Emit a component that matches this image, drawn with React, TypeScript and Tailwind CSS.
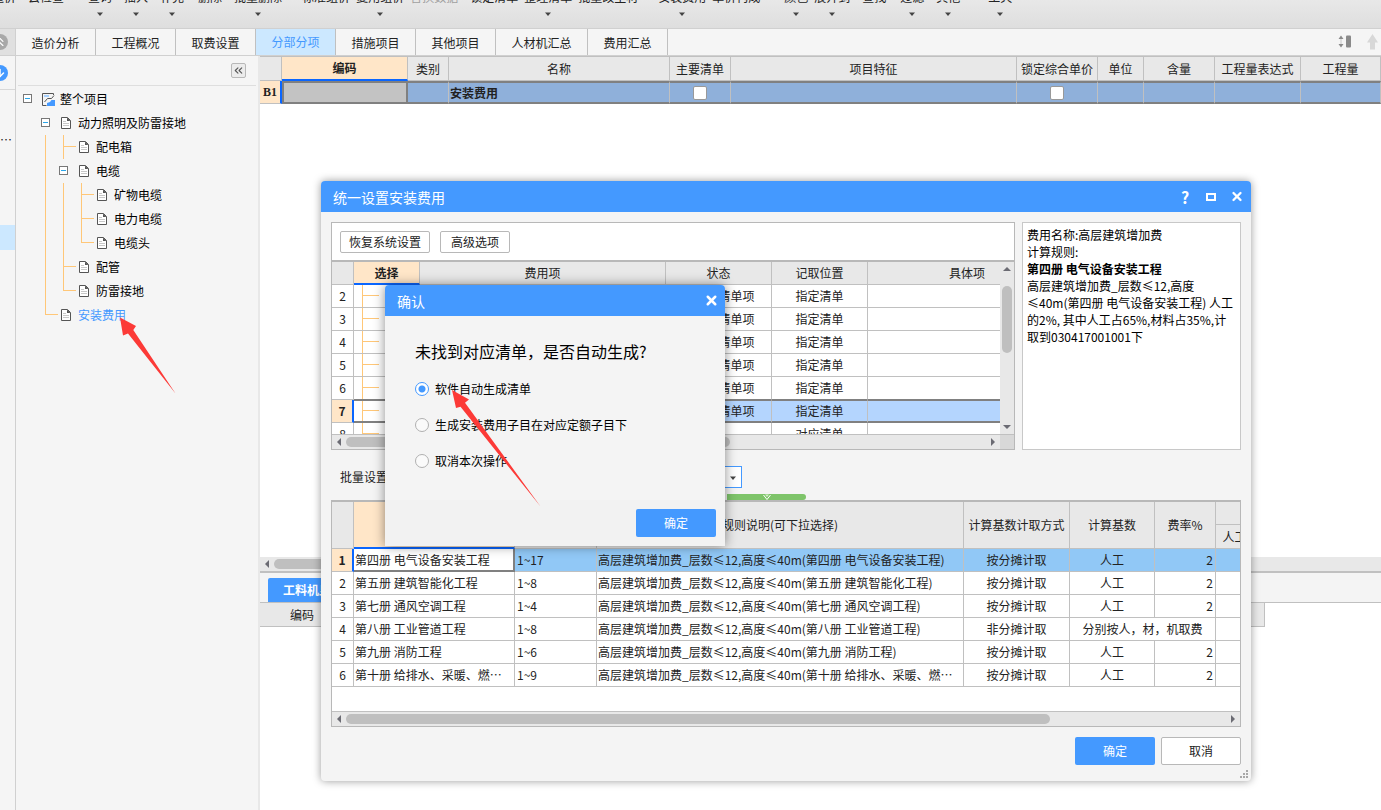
import { useState } from "react"
import type { ReactNode } from "react"
import { ArrowDown, ChevronsLeft, ChevronsUp, X } from "lucide-react"
import clsx from "clsx"

type Tool = {
  label: string
  spacing: string
  menu?: boolean
  disabled?: boolean
}

const tools: Tool[] = [
  { label: "造价", spacing: "-ml-2" },
  { label: "云检查", spacing: "ml-3" },
  { label: "查询", spacing: "ml-6", menu: true },
  { label: "插入", spacing: "ml-3", menu: true },
  { label: "补充", spacing: "ml-3", menu: true },
  { label: "删除", spacing: "ml-3.5" },
  { label: "批量删除", spacing: "ml-3", menu: true },
  { label: "标准组价", spacing: "ml-5" },
  { label: "复用组价", spacing: "ml-1.5", menu: true },
  { label: "替换数据", spacing: "ml-1.5", disabled: true },
  { label: "锁定清单", spacing: "ml-3" },
  { label: "整理清单", spacing: "ml-1.5", menu: true },
  { label: "批量改主材", spacing: "ml-1.5" },
  { label: "安装费用", spacing: "ml-5", menu: true },
  { label: "单价构成", spacing: "ml-1.5" },
  { label: "颜色", spacing: "ml-6", menu: true },
  { label: "展开到", spacing: "ml-1.5", menu: true },
  { label: "查找", spacing: "ml-3" },
  { label: "过滤", spacing: "ml-3.5", menu: true },
  { label: "其他", spacing: "ml-3", menu: true },
  { label: "工具", spacing: "ml-7", menu: true },
]

const tabs = [
  "造价分析",
  "工程概况",
  "取费设置",
  "分部分项",
  "措施项目",
  "其他项目",
  "人材机汇总",
  "费用汇总",
]

type Guide = "none" | "line" | "tee" | "end" | "toggle"

const tree: { label: string; guides: Guide[]; active?: boolean }[] = [
  { label: "整个项目", guides: ["toggle"] },
  { label: "动力照明及防雷接地", guides: ["none", "toggle"] },
  { label: "配电箱", guides: ["none", "line", "tee"] },
  { label: "电缆", guides: ["none", "line", "toggle"] },
  { label: "矿物电缆", guides: ["none", "line", "line", "tee"] },
  { label: "电力电缆", guides: ["none", "line", "line", "tee"] },
  { label: "电缆头", guides: ["none", "line", "line", "end"] },
  { label: "配管", guides: ["none", "line", "tee"] },
  { label: "防雷接地", guides: ["none", "line", "end"] },
  { label: "安装费用", guides: ["none", "end"], active: true },
]

const feeRows = [
  { no: 2, state: "可计取清单项", position: "指定清单" },
  { no: 3, state: "可计取清单项", position: "指定清单" },
  { no: 4, state: "可计取清单项", position: "指定清单" },
  { no: 5, state: "可计取清单项", position: "指定清单" },
  { no: 6, state: "可计取清单项", position: "指定清单" },
  { no: 7, state: "可计取清单项", position: "指定清单" },
  { no: 8, state: "", position: "对应清单" },
]

const ruleRows = [
  { book: "第四册 电气设备安装工程", range: "1~17" },
  { book: "第五册 建筑智能化工程", range: "1~8" },
  { book: "第七册 通风空调工程", range: "1~4" },
  { book: "第八册 工业管道工程", range: "1~8", merged: true },
  { book: "第九册 消防工程", range: "1~6" },
  { book: "第十册 给排水、采暖、燃…", range: "1~9", cut: true },
]

const options = [
  "软件自动生成清单",
  "生成安装费用子目在对应定额子目下",
  "取消本次操作",
]

const Caret = () => (
  <svg width="6" height="4" viewBox="0 0 6 4" aria-hidden="true">
    <path d="M0 0.5h6L3 4z" fill="#444" />
  </svg>
)

const ScrollArrow = ({ dir }: { dir: "left" | "right" | "up" | "down" }) => {
  const paths = {
    left: "M7 1v8L3 5z",
    right: "M3 1v8l4-4z",
    up: "M1 7h8L5 3z",
    down: "M1 3h8L5 7z",
  }
  return (
    <svg
      className="shrink-0"
      width="10"
      height="10"
      viewBox="0 0 10 10"
      aria-hidden="true"
    >
      <path d={paths[dir]} fill="#6b6b73" />
    </svg>
  )
}

const PageIcon = () => (
  <svg width="10" height="12" viewBox="0 0 10 12" fill="none" aria-hidden="true">
    <path d="M0.5 0.5h6l3 3v8h-9z" fill="#fff" stroke="#555" />
    <path d="M6 0.5l3.5 3.5H6z" fill="#555" />
    <path d="M2 4.5h3M2 6.5h6M2 8.5h6" stroke="#c8c8c8" />
  </svg>
)

const ProjectIcon = () => (
  <svg width="13" height="13" viewBox="0 0 13 13" fill="none" aria-hidden="true">
    <path d="M11.5 2V0.5H0.5v12h4" stroke="#555" />
    <path d="M2 2h5v2H2z" fill="#a9d2ff" />
    <path d="M12 2.5L9.500 5.5H5.5L2.500 9" stroke="#555" />
    <path d="M5 12.500V10l3-1 1.500-2H13v6H5z" fill="#4499ff" />
  </svg>
)

const GuideCell = ({ type }: { type: Guide }) => {
  if (type === "toggle") {
    return (
      <span className="flex w-[18px] shrink-0 items-center justify-center">
        <svg width="10" height="10" viewBox="0 0 10 10" aria-hidden="true">
          <rect x="1.5" y="0.5" width="8" height="8" fill="#fff" stroke="#777" />
          <path d="M3 4.5h5" stroke="#2aa5e8" />
        </svg>
      </span>
    )
  }
  return (
    <svg
      className="shrink-0 overflow-visible"
      width="18"
      height="24"
      viewBox="0 0 18 24"
      fill="none"
      stroke="#ffc778"
      aria-hidden="true"
    >
      {(type === "line" || type === "tee") && <path d="M9.5 0v24" />}
      {type === "end" && <path d="M9.5 0v12" />}
      {(type === "tee" || type === "end") && <path d="M9 11.5h13" />}
    </svg>
  )
}

const Th = ({
  children,
  active,
  className,
  rowSpan,
}: {
  children?: ReactNode
  active?: boolean
  className?: string
  rowSpan?: number
}) => (
  <th
    rowSpan={rowSpan}
    className={clsx(
      "overflow-hidden whitespace-nowrap border-r border-r-[#c0c0c0] p-0 text-center",
      active
        ? "border-b-2 border-b-[#0a66ff] bg-[#ffe6c8] font-bold"
        : "border-b border-b-[#c0c0c0] bg-[#e8e8e8] font-normal",
      className,
    )}
  >
    {children}
  </th>
)

const Ribbon = () => (
  <div className="flex h-7 shrink-0 items-end overflow-hidden bg-linear-to-b from-[#e8e8e8] to-[#dedede]">
    {tools.map((tool) => (
      <button
        key={tool.label}
        disabled={tool.disabled}
        className={clsx(
          "flex h-[39px] shrink-0 flex-col items-center gap-[7px] whitespace-nowrap leading-4",
          tool.spacing,
          tool.disabled && "text-[#a0a0a0]",
        )}
      >
        {tool.label}
        {tool.menu && <Caret />}
      </button>
    ))}
  </div>
)

const TabBar = () => (
  <div className="flex h-7 shrink-0 border-y border-[#d0d0d0] bg-[#f5f5f5]">
    <div className="flex w-4 items-center overflow-hidden border-r border-[#d0d0d0] bg-[#e0e0e0]">
      <button
        aria-label="收起"
        className="-ml-2 flex size-4 shrink-0 items-center justify-center rounded-full bg-[#a8a8a8] text-white"
      >
        <ChevronsUp size={14} />
      </button>
    </div>
    <nav className="flex">
      {tabs.map((tab) => (
        <button
          key={tab}
          className={clsx(
            "border-r border-[#c0c0c0]",
            tab.length > 4 ? "w-[92px]" : "w-20",
            tab === "分部分项" ? "bg-[#cce8ff] text-[#4499ff]" : "pt-0.5",
          )}
        >
          {tab}
        </button>
      ))}
    </nav>
    <div className="ml-auto flex items-center gap-3">
      <svg width="16" height="14" viewBox="0 0 16 14" aria-hidden="true">
        <path d="M0.5 4h5L3 0.5zM0.5 9h5L3 12.500z" fill="#8a8a8a" />
        <path d="M3 4v5" stroke="#c8c8c8" />
        <rect x="8" y="0.500" width="5" height="12" rx="1" fill="#8a8a8a" />
      </svg>
      <svg width="15" height="16" viewBox="0 0 15 16" aria-hidden="true">
        <path d="M6.5 0L12 8.500H9v7H4v-7H1z" fill="#d8d8d8" />
      </svg>
    </div>
  </div>
)

const Sidebar = () => (
  <aside className="flex w-[260px] shrink-0 bg-[#f5f5f5]">
    <div className="flex w-4 flex-col overflow-hidden border-r border-[#d0d0d0]">
      <div className="flex h-[34px] items-center border-b border-[#d8d8d8]">
        <button
          aria-label="下载"
          className="-ml-2 flex size-4 shrink-0 items-center justify-center rounded-full bg-[#4499ff] text-white"
        >
          <ArrowDown size={12} strokeWidth={3} />
        </button>
      </div>
      <div className="mt-[42px] leading-4">…</div>
      <div className="mt-[77px] h-[25px] bg-[#cce8ff]" />
    </div>
    <div className="flex-1 border-r-2 border-[#e8e8e8]">
      <div className="mx-0.5 flex h-[30px] items-center justify-end border-b border-[#dedede] pr-2.5">
        <button
          aria-label="折叠"
          className="flex size-[15px] items-center justify-center rounded-xs border border-[#b8b8b8] bg-[#ececec] text-[#555]"
        >
          <ChevronsLeft size={13} />
        </button>
      </div>
      <ul className="pl-0.5 pt-px">
        {tree.map((node, index) => (
          <li key={node.label} className="flex h-6 items-center">
            {node.guides.map((guide, i) => (
              <GuideCell key={i} type={guide} />
            ))}
            <span className="flex w-6 justify-center">
              {index === 0 ? <ProjectIcon /> : <PageIcon />}
            </span>
            <span className={node.active ? "text-[#4499ff]" : "text-black"}>
              {node.label}
            </span>
          </li>
        ))}
      </ul>
    </div>
  </aside>
)

const GridCheckbox = ({ label }: { label: string }) => (
  <input
    type="checkbox"
    aria-label={label}
    className="mx-auto block size-3.5 appearance-none rounded-xs border border-[#999] bg-white"
  />
)

const MainGrid = () => {
  const cell = "border-y-2 border-r border-y-[#808080] border-r-[#c0c0c0] p-0"
  return (
    <table className="w-full table-fixed border-separate border-spacing-0">
      <colgroup>
        <col className="w-[22px]" />
        <col className="w-[126px]" />
        <col className="w-[41px]" />
        <col className="w-[221px]" />
        <col className="w-[61px]" />
        <col className="w-[286px]" />
        <col className="w-[81px]" />
        <col className="w-[46px]" />
        <col className="w-[71px]" />
        <col className="w-[86px]" />
        <col />
      </colgroup>
      <thead>
        <tr className="h-[25px]">
          <Th className="border-t border-t-[#c0c0c0]" />
          <Th active className="border-t border-t-[#c0c0c0]">
            编码
          </Th>
          {[
            "类别",
            "名称",
            "主要清单",
            "项目特征",
            "锁定综合单价",
            "单位",
            "含量",
            "工程量表达式",
            "工程量",
          ].map((title) => (
            <Th key={title} className="border-t border-t-[#c0c0c0]">
              {title}
            </Th>
          ))}
        </tr>
      </thead>
      <tbody>
        <tr className="h-[23px] bg-[#8fb0da] leading-4">
          <td className="border-b border-r-2 border-b-[#c0c0c0] border-r-[#0a66ff] bg-[#ffe6c8] p-0 text-center font-['Liberation_Serif',serif] font-bold">
            B1
          </td>
          <td className="border-2 border-[#808080] bg-[#c3c3c3] p-0" />
          <td className={cell} />
          <td className={clsx(cell, "pl-px font-bold")}>安装费用</td>
          <td className={cell}>
            <GridCheckbox label="主要清单" />
          </td>
          <td className={cell} />
          <td className={cell}>
            <GridCheckbox label="锁定综合单价" />
          </td>
          <td className={cell} />
          <td className={cell} />
          <td className={cell} />
          <td className={cell} />
        </tr>
      </tbody>
    </table>
  )
}

const MainArea = () => (
  <main className="flex min-w-0 flex-1 flex-col bg-white">
    <MainGrid />
    <div className="flex-1" />
    <div className="flex h-4 shrink-0 items-center gap-0.5 border-b-2 border-[#c0c0c0] bg-[#e8e8e8] pl-0.5">
      <ScrollArrow dir="left" />
      <div className="h-2.5 w-1/2 rounded-full bg-[#bfbfbf]" />
    </div>
    <div className="flex h-[30px] shrink-0 items-end border-b border-[#c0c0c0] bg-[#f4f4f4] pl-2">
      <button className="h-6 rounded-t-xs bg-[#4499ff] px-[15px] font-bold text-white">
        工料机显示
      </button>
    </div>
    <div className="h-[207px] shrink-0">
      <table className="w-[1005px] table-fixed border-separate border-spacing-0">
        <colgroup>
          <col className="w-[84px]" />
          <col />
        </colgroup>
        <thead>
          <tr className="h-6">
            <th className="border-b border-[#c0c0c0] bg-[#e8e8e8] p-0 font-normal">
              编码
            </th>
            <Th />
          </tr>
        </thead>
      </table>
    </div>
  </main>
)

const HScroll = ({ thumb, corner }: { thumb: string; corner?: boolean }) => (
  <div className="flex h-[15px] border-t border-[#c0c0c0] bg-[#e8e8e8]">
    <div className="flex flex-1 items-center justify-between px-0.5">
      <div className="flex flex-1 items-center gap-0.5">
        <ScrollArrow dir="left" />
        <div className={clsx("h-2.5 rounded-full bg-[#bfbfbf]", thumb)} />
      </div>
      <ScrollArrow dir="right" />
    </div>
    {corner && <div className="w-3.5 bg-[#d8d8d8]" />}
  </div>
)

const FeePanel = () => (
  <section className="min-w-0 flex-1 border border-[#b8b8b8] bg-white">
    <div className="flex h-[37px] items-center gap-2.5 px-2">
      <button className="h-[22px] w-[90px] rounded-xs border border-[#b8b8b8] bg-white">
        恢复系统设置
      </button>
      <button className="h-[22px] w-[70px] rounded-xs border border-[#b8b8b8] bg-white">
        高级选项
      </button>
    </div>
    <div className="flex h-[174px] overflow-hidden border-t-2 border-[#b8b8b8]">
      <div className="min-w-0 flex-1 overflow-hidden">
        <table className="w-[735px] table-fixed border-separate border-spacing-0">
          <colgroup>
            <col className="w-[22px]" />
            <col className="w-[66px]" />
            <col className="w-[246px]" />
            <col className="w-[106px]" />
            <col className="w-[96px]" />
            <col className="w-[199px]" />
          </colgroup>
          <thead>
            <tr className="h-[23px]">
              <Th />
              <Th active>选择</Th>
              <Th>费用项</Th>
              <Th>状态</Th>
              <Th>记取位置</Th>
              <Th>具体项</Th>
            </tr>
          </thead>
          <tbody>
            {feeRows.map((row) => {
              const selected = row.no === 7
              const cell = clsx(
                "overflow-hidden whitespace-nowrap border-r border-r-[#c0c0c0] p-0 text-center",
                selected
                  ? "border-b-2 border-t border-b-[#808080] border-t-[#808080]"
                  : row.no === 6
                    ? "border-b border-b-[#808080]"
                    : "border-b border-b-[#c0c0c0]",
              )
              return (
                <tr
                  key={row.no}
                  className={clsx("h-[23px] leading-4", selected && "bg-[#b4d5fe]")}
                >
                  <td
                    className={clsx(
                      "border-b border-b-[#c0c0c0] p-0 text-center",
                      selected
                        ? "border-r-2 border-r-[#0a66ff] bg-[#ffe6c8] font-bold"
                        : "border-r border-r-[#c0c0c0]",
                    )}
                  >
                    {row.no}
                  </td>
                  <td className={clsx(cell, "bg-white")}>
                    <svg
                      className="block"
                      width="26"
                      height="20"
                      viewBox="0 0 26 20"
                      fill="none"
                      stroke="#ffc778"
                      overflow="visible"
                      aria-hidden="true"
                    >
                      <path d="M8.500 -1v22M9 9.500h16" />
                    </svg>
                  </td>
                  <td className={cell} />
                  <td className={cell}>{row.state}</td>
                  <td className={cell}>{row.position}</td>
                  <td className={cell} />
                </tr>
              )
            })}
          </tbody>
        </table>
      </div>
      <div className="flex w-3.5 flex-col items-center justify-between bg-[#e8e8e8] py-0.5">
        <div className="flex flex-col items-center gap-3">
          <ScrollArrow dir="up" />
          <div className="h-[67px] w-2.5 rounded-full bg-[#bfbfbf]" />
        </div>
        <ScrollArrow dir="down" />
      </div>
    </div>
    <HScroll thumb="w-[384px]" corner />
  </section>
)

const RulePanel = () => {
  const cell = "overflow-hidden whitespace-nowrap border-b border-r border-[#c0c0c0] p-0"
  return (
    <section className="border border-t-2 border-[#b8b8b8] bg-white">
      <div className="h-[209px] overflow-hidden">
        <table className="w-[922px] table-fixed border-separate border-spacing-0">
          <colgroup>
            <col className="w-[22px]" />
            <col className="w-[161px]" />
            <col className="w-[82px]" />
            <col className="w-[367px]" />
            <col className="w-[106px]" />
            <col className="w-[85px]" />
            <col className="w-[61px]" />
            <col className="w-[38px]" />
          </colgroup>
          <thead>
            <tr className="h-[23px]">
              <Th rowSpan={2} />
              <Th rowSpan={2} active>
                专业
              </Th>
              <Th rowSpan={2}>层高</Th>
              <Th rowSpan={2}>规则说明(可下拉选择)</Th>
              <Th rowSpan={2}>计算基数计取方式</Th>
              <Th rowSpan={2}>计算基数</Th>
              <Th rowSpan={2}>费率%</Th>
              <Th />
            </tr>
            <tr className="h-6">
              <Th>人工</Th>
            </tr>
          </thead>
          <tbody>
            {ruleRows.map((row, index) => {
              const selected = index === 0
              return (
                <tr
                  key={row.book}
                  className={clsx("h-[23px] leading-4", selected && "bg-[#91c8f6]")}
                >
                  <td
                    className={clsx(
                      "border-b border-b-[#c0c0c0] p-0 text-center",
                      selected
                        ? "border-r-2 border-r-[#0a66ff] bg-[#ffe6c8] font-bold"
                        : "border-r border-r-[#c0c0c0]",
                    )}
                  >
                    {index + 1}
                  </td>
                  <td
                    className={clsx(
                      "overflow-hidden whitespace-nowrap p-0 pl-px",
                      selected
                        ? "border-b-2 border-r-2 border-[#808080] bg-white"
                        : "border-b border-r border-[#c0c0c0]",
                    )}
                  >
                    {row.book}
                  </td>
                  <td className={clsx(cell, "pl-0.5")}>{row.range}</td>
                  <td className={clsx(cell, "pl-px")}>
                    高层建筑增加费_层数≤12,高度≤40m({row.book}
                    {!row.cut && ")"}
                  </td>
                  <td className={clsx(cell, "text-center")}>
                    {row.merged ? "非分摊计取" : "按分摊计取"}
                  </td>
                  {row.merged ? (
                    <td colSpan={2} className={clsx(cell, "text-center")}>
                      分别按人，材，机取费
                    </td>
                  ) : (
                    <>
                      <td className={clsx(cell, "text-center")}>人工</td>
                      <td className={clsx(cell, "pr-0.5 text-right")}>2</td>
                    </>
                  )}
                  <td className={cell} />
                </tr>
              )
            })}
          </tbody>
        </table>
      </div>
      <HScroll thumb="w-[704px]" />
    </section>
  )
}

const SettingsDialog = () => (
  <div
    role="dialog"
    aria-label="统一设置安装费用"
    className="absolute left-[321px] top-[181px] w-[930px] overflow-hidden rounded bg-[#f4f4f4] shadow-[0_0_8px_rgba(0,0,0,0.4)]"
  >
    <header className="flex h-[31px] items-center justify-between bg-[#4499ff] pl-3 pr-[7px] text-white">
      <h1 className="text-sm">统一设置安装费用</h1>
      <div className="flex gap-3">
        <button aria-label="帮助" className="w-3.5 text-base font-bold leading-4">
          ?
        </button>
        <button aria-label="最大化" className="flex w-3.5 items-center justify-center">
          <svg width="10" height="8" viewBox="0 0 10 8" aria-hidden="true">
            <rect x="1" y="1" width="8" height="6" fill="none" stroke="#fff" strokeWidth="2" />
          </svg>
        </button>
        <button aria-label="关闭" className="flex w-3.5 items-center justify-center">
          <X size={15} strokeWidth={4} />
        </button>
      </div>
    </header>
    <div className="px-2.5 pb-4 pt-2.5">
      <div className="flex gap-[7px]">
        <FeePanel />
        <section className="w-[219px] whitespace-nowrap border border-[#c8c8c8] bg-white px-1 pt-[3px] leading-[17px] text-black">
          <p>费用名称:高层建筑增加费</p>
          <p>计算规则:</p>
          <p className="font-bold">第四册 电气设备安装工程</p>
          <p>
            高层建筑增加费_层数≤12,高度
            <br />
            ≤40m(第四册 电气设备安装工程) 人工
            <br />
            的2%, 其中人工占65%,材料占35%,计
            <br />
            取到030417001001下
          </p>
        </section>
      </div>
      <div className="mt-4 flex h-[22px] items-center gap-4 pl-[9px]">
        <label htmlFor="batch">批量设置</label>
        <span className="relative flex w-[338px]">
          <select
            id="batch"
            className="h-[22px] w-full appearance-none border border-[#4499ff] bg-white"
          />
          <span className="pointer-events-none absolute right-1.5 top-2.5 flex">
            <Caret />
          </span>
        </span>
      </div>
      <button
        aria-label="展开"
        className="ml-[396px] mt-1.5 flex h-1.5 w-[79px] justify-center rounded-r-full bg-[#7ec46a]"
      >
        <svg width="8" height="6" viewBox="0 0 8 6" aria-hidden="true">
          <path d="M0.5 1L4 5.500 7.500 1" fill="none" stroke="#fff" />
          <path d="M2 0.500L4 3 6 0.500z" fill="#d4f0c8" />
        </svg>
      </button>
      <RulePanel />
      <div className="mt-2.5 flex justify-end gap-1.5">
        <button className="h-7 w-20 rounded-xs bg-[#4499ff] text-white">确定</button>
        <button className="h-7 w-20 rounded-xs border border-[#b8b8b8] bg-white">
          取消
        </button>
      </div>
    </div>
    <svg
      className="absolute bottom-0.5 right-0.5"
      width="9"
      height="9"
      viewBox="0 0 9 9"
      fill="#a8a8a8"
      aria-hidden="true"
    >
      <path d="M6 0h2v2H6zM3 3h2v2H3zM6 3h2v2H6zM0 6h2v2H0zM3 6h2v2H3zM6 6h2v2H6z" />
    </svg>
  </div>
)

const ConfirmDialog = () => {
  const [choice, setChoice] = useState(0)

  return (
    <div
      role="dialog"
      aria-label="确认"
      className="absolute left-[385px] top-[285px] w-[340px] overflow-hidden rounded-t bg-[#f4f4f4] text-black shadow-[0_0_12px_rgba(0,0,0,0.45)]"
    >
      <header className="flex h-[31px] items-center justify-between bg-[#4499ff] pl-3 pr-1.5 text-white">
        <h2 className="text-sm">确认</h2>
        <button aria-label="关闭">
          <X size={15} strokeWidth={4} />
        </button>
      </header>
      <div className="h-[184px] pl-[30px] pt-[23px]">
        <p className="text-base">未找到对应清单，是否自动生成?</p>
        <div className="mt-[18px] flex flex-col gap-5">
          {options.map((option, index) => (
            <label key={option} className="flex h-4 items-center gap-1.5">
              <input
                type="radio"
                name="choice"
                checked={choice === index}
                onChange={() => setChoice(index)}
                className="size-3.5 appearance-none rounded-full border border-[#b0b0b0] bg-[#fafafa] checked:border-[#4499ff] checked:bg-[radial-gradient(circle,#4499ff_3px,#fff_4px)]"
              />
              {option}
            </label>
          ))}
        </div>
      </div>
      <footer className="flex justify-end bg-[#f2f2f2] p-[9px]">
        <button className="h-7 w-20 rounded-xs bg-[#4499ff] text-white">确定</button>
      </footer>
    </div>
  )
}

export default function App() {
  return (
    <div className="relative flex h-screen flex-col overflow-hidden bg-white font-['Noto_Sans_CJK_SC',sans-serif] text-xs text-[#222]">
      <Ribbon />
      <TabBar />
      <div className="flex min-h-0 flex-1">
        <Sidebar />
        <MainArea />
      </div>
      <SettingsDialog />
      <ConfirmDialog />
      {/* pointer arrows */}
      <svg
        className="pointer-events-none absolute left-[120px] top-[317px]"
        width="56"
        height="77"
        viewBox="0 0 56 77"
        fill="#fc3a37"
        aria-hidden="true"
      >
        <path d="M0 0.500L16 9l-2.700 4L55.500 76.500 8 16.500 3 18.500z" />
      </svg>
      <svg
        className="pointer-events-none absolute left-[452px] top-[390px]"
        width="89"
        height="117"
        viewBox="0 0 89 117"
        fill="#fc3a37"
        aria-hidden="true"
      >
        <path d="M0 0l17 9.500-4 3.300L88.500 116.500 8.500 16.700 4 18z" />
      </svg>
    </div>
  )
}
